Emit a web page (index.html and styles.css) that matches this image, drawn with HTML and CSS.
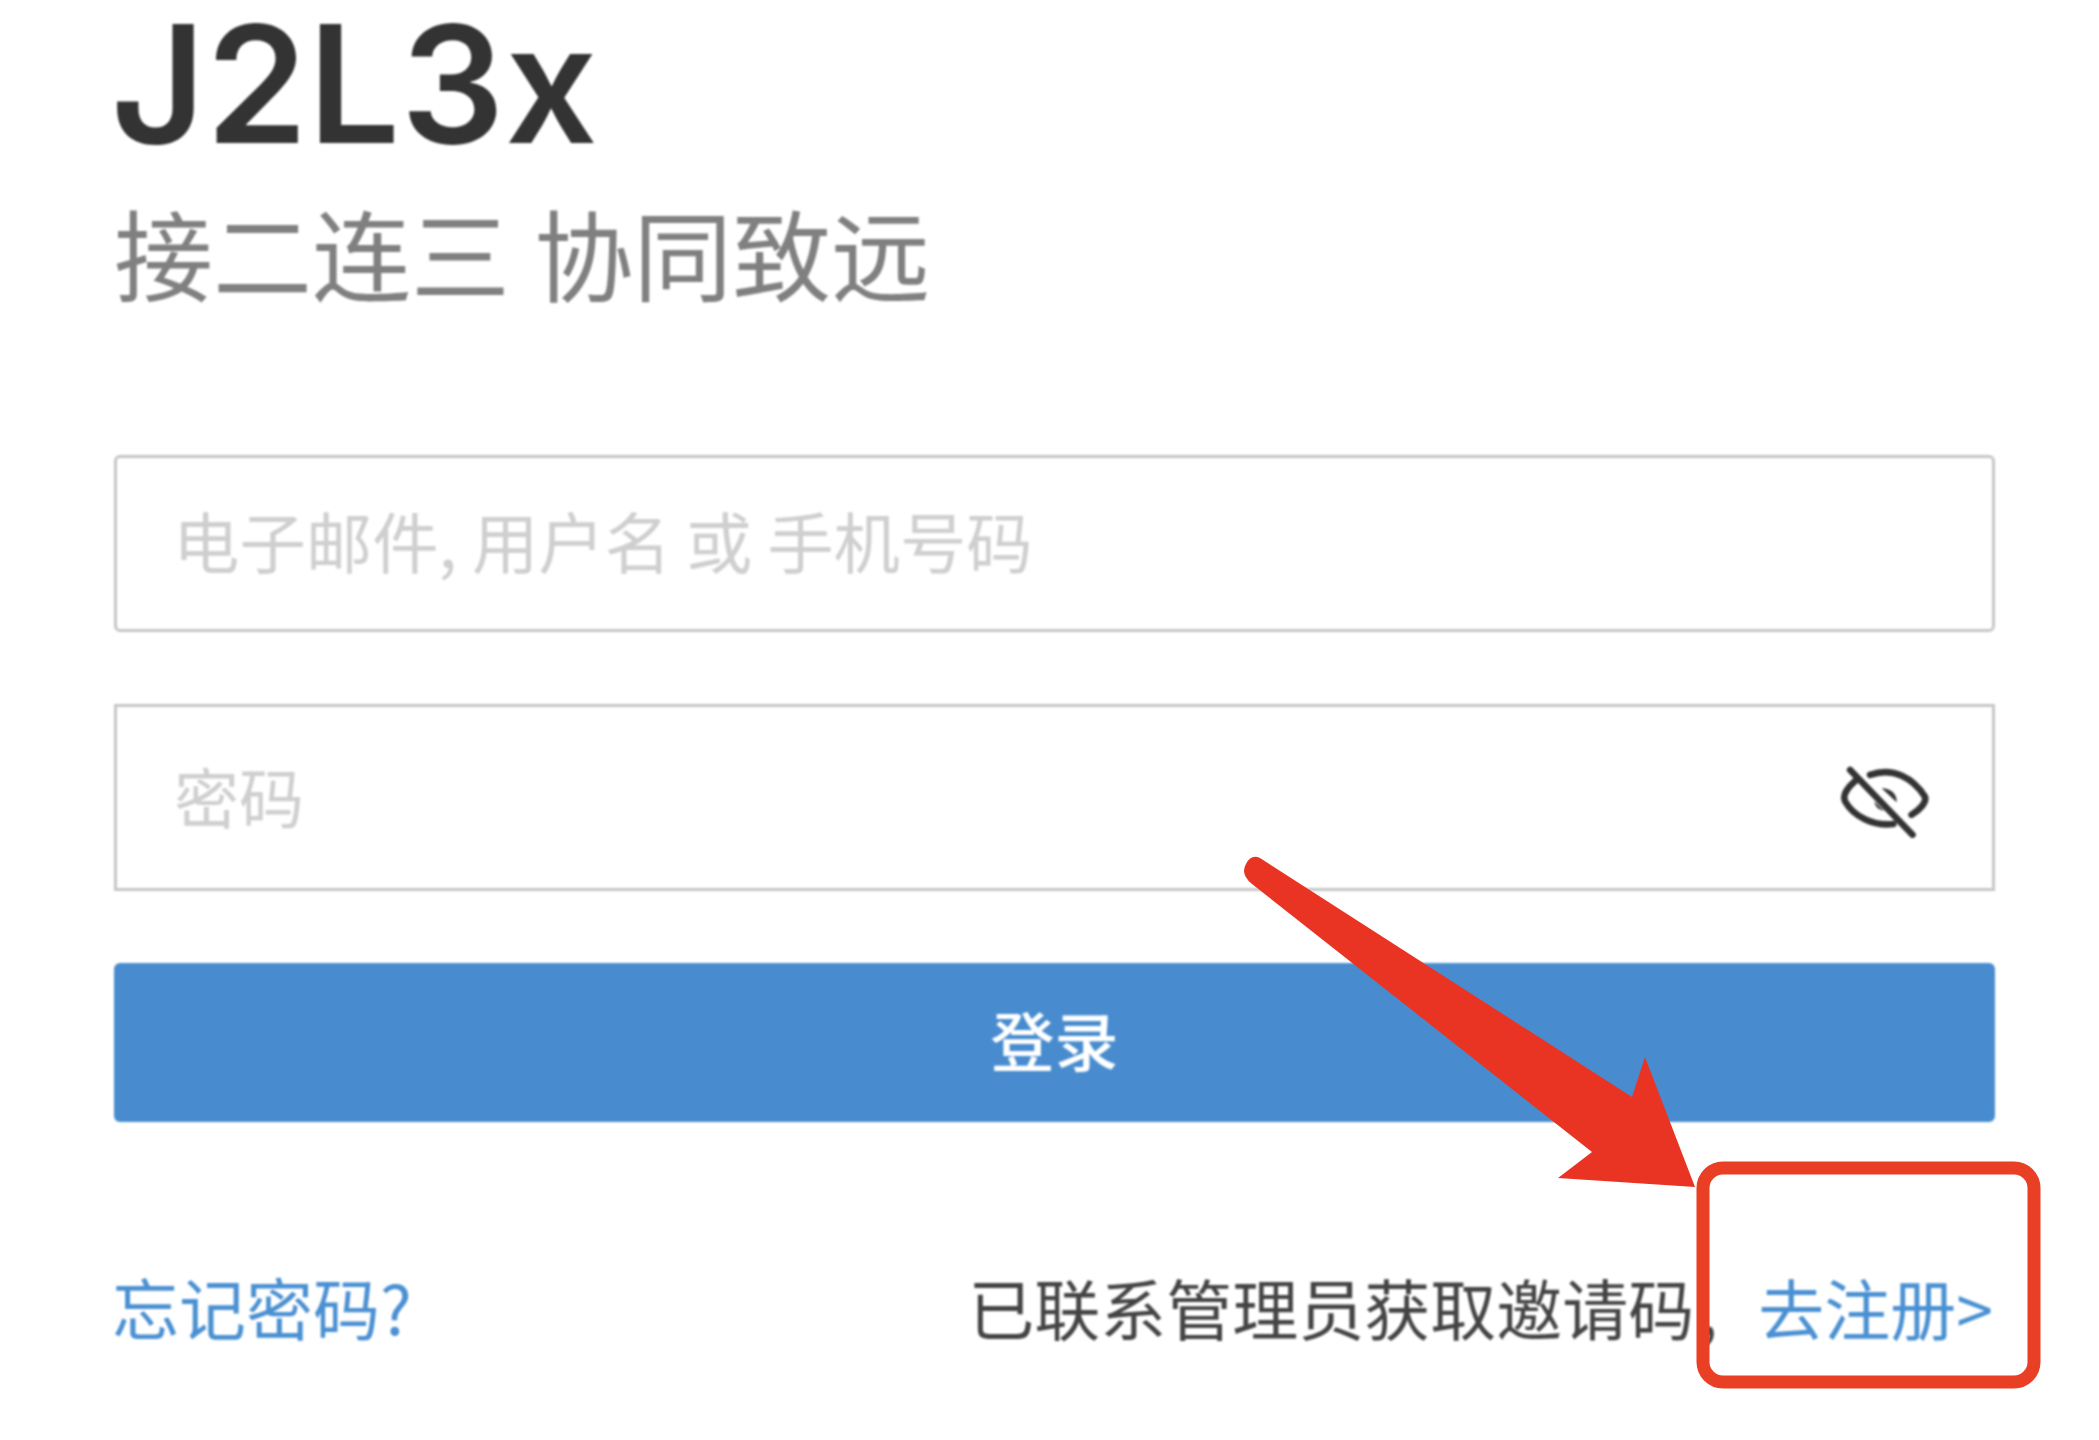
FILE: index.html
```html
<!DOCTYPE html>
<html lang="zh-CN">
<head>
<meta charset="utf-8">
<title>J2L3x 登录</title>
<link rel="stylesheet" href="styles.css">
</head>
<body>
<main class="page">
  <header class="brand">
    <h1 class="brand-name">J2L3x</h1>
    <p class="brand-slogan">接二连三 协同致远</p>
  </header>
  <form class="login">
    <div class="field field-account"><span class="placeholder placeholder-account">电子邮件, 用户名 或 手机号码</span></div>
    <div class="field field-password">
      <span class="placeholder">密码</span>
      <svg class="eye" viewBox="180 100 270 220" fill="none" stroke="#333" stroke-width="20" stroke-linecap="round" aria-hidden="true">
        <path d="M210 115L398 310"/>
        <path d="M270 130C340 105 400 140 435 195C442 212 420 235 395 250"/>
        <path d="M225 148C200 170 185 190 195 210C220 255 280 285 340 278"/>
        <path d="M305 170C335 170 352 190 350 212Z" fill="#333" stroke="none"/>
        <path d="M283 210C285 225 295 235 312 238Z" fill="#333" stroke="none"/>
      </svg>
    </div>
    <div class="submit">登录</div>
  </form>
  <footer class="links">
    <a class="link link-forgot">忘记密码?</a>
    <p class="register"><span class="hint">已联系管理员获取邀请码<span class="comma">,</span></span><a class="link link-register">去注册&gt;</a></p>
  </footer>
</main>
<svg class="annotation" viewBox="0 0 2099 1440" aria-hidden="true">
  <path class="arrow" d="M1260 858L1632 1097L1645 1057L1695 1187L1558 1178L1592 1152L1252 884Q1240 874 1246 864Q1251 854 1260 858Z"/>
  <rect class="callout" x="1703" y="1168" width="331" height="214" rx="20"/>
</svg>
</body>
</html>
```
FILE: styles.css
```css
* { box-sizing: border-box; }
html, body { margin: 0; height: 1440px; overflow: hidden; background: #fff; }
body {
  font-family: "Noto Sans CJK SC", "Noto Sans", sans-serif;
  color: #444;
}
.page {
  width: 2099px;
  height: 1440px;
  padding: 0 104px 0 114px;
  display: flex;
  flex-direction: column;
  filter: blur(1px);
}
.brand { display: flex; flex-direction: column; }
.brand-name {
  margin: 0 0 0 -3px;
  height: 170px;
  font-family: Inter, "Noto Sans", sans-serif;
  font-size: 163px;
  font-weight: 600;
  line-height: 168px;
  letter-spacing: 0.5px;
  color: #333;
}
.brand-slogan {
  margin: 24px 0 0;
  height: 115px;
  font-size: 99px;
  line-height: 115px;
  color: #808080;
  word-spacing: 2px;
  white-space: nowrap;
}
.login { margin-top: 146px; display: flex; flex-direction: column; }
.field {
  display: flex;
  align-items: center;
  justify-content: space-between;
  border: 3px solid #c6c6c6;
  background: #fff;
}
.field-account { height: 177px; padding: 0 56px 10px; border-radius: 6px; }
.field-password { height: 187px; margin-top: 72px; padding: 0 62px 6px 57px; }
.placeholder { font-size: 65px; line-height: 80px; color: #cfcfcf; white-space: nowrap; }
.placeholder-account { font-size: 66.4px; }
.eye { width: 90px; height: 73px; display: block; margin-top: 14px; }
.submit {
  height: 159px;
  margin-top: 72px;
  padding-bottom: 10px;
  border-radius: 6px;
  background: #488ccf;
  color: #fff;
  font-size: 64px;
  font-weight: 500;
  display: flex;
  align-items: center;
  justify-content: center;
}
.links {
  margin-top: 142px;
  margin-left: -2px;
  margin-right: 2px;
  display: flex;
  justify-content: space-between;
  align-items: center;
  font-size: 66px;
  line-height: 84px;
}
.link { color: #4a90d2; }
.link-forgot { font-size: 67px; }
.register { margin: 0; display: flex; }
.hint { width: 790px; white-space: nowrap; }
.comma { margin-left: 5px; }
.annotation { position: absolute; left: 0; top: 0; width: 2099px; height: 1440px; }
.arrow { fill: #e93423; }
.callout { fill: none; stroke: #e83f25; stroke-width: 13; }
```
